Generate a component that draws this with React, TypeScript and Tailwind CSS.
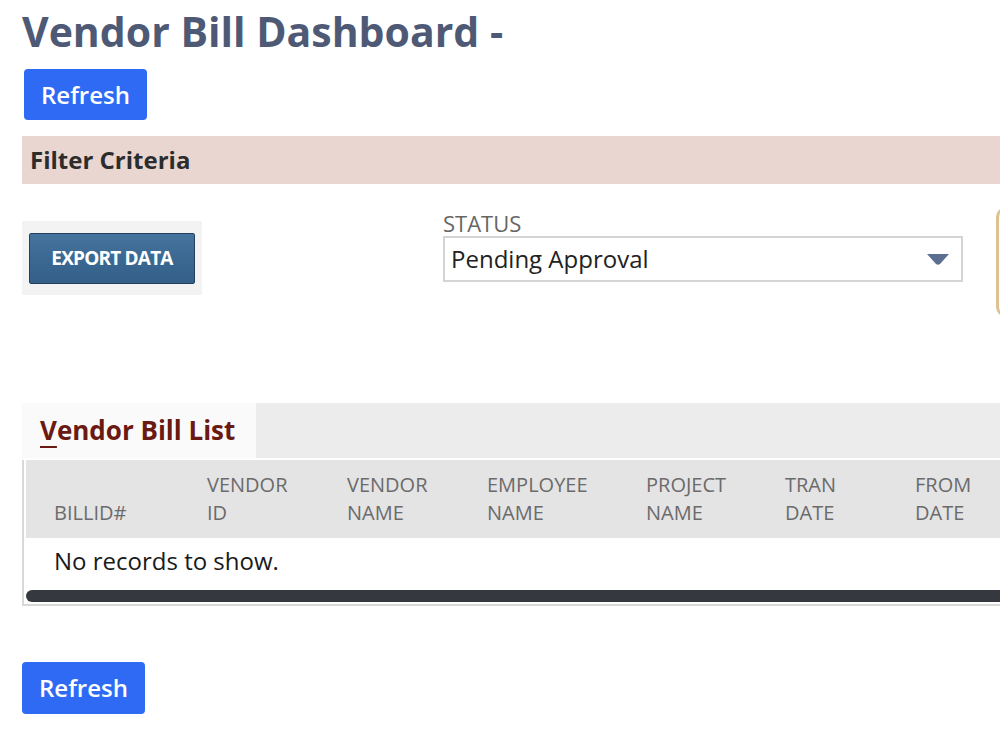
import { useState } from "react";

const columns = [
  { top: "", bottom: "BILLID#", w: "w-[153px]" },
  { top: "VENDOR", bottom: "ID", w: "w-[140px]" },
  { top: "VENDOR", bottom: "NAME", w: "w-[140px]" },
  { top: "EMPLOYEE", bottom: "NAME", w: "w-[159px]" },
  { top: "PROJECT", bottom: "NAME", w: "w-[139px]" },
  { top: "TRAN", bottom: "DATE", w: "w-[130px]" },
  { top: "FROM", bottom: "DATE", w: "w-[120px]" },
];

export default function App() {
  const [status, setStatus] = useState("Pending Approval");

  return (
    <div className="w-[1000px] h-[750px] overflow-hidden bg-white font-['Open_Sans',sans-serif]">
      <div className="pl-[22px]">
        <h1 className="pt-[4px] text-[41px] leading-[54px] font-bold text-[#4e5a75] whitespace-nowrap">
          Vendor Bill Dashboard -
        </h1>

        <button className="mt-[11px] ml-[2px] w-[123px] h-[51px] rounded-[4px] bg-[#2f6af5] text-white text-[24px] font-semibold">
          Refresh
        </button>

        <div className="mt-[16px] h-[48px] bg-[#e9d6d0] flex items-center pl-[8px]">
          <span className="text-[24px] font-bold text-[#2c2c2c]">Filter Criteria</span>
        </div>

        <div className="flex mt-[26px] h-[150px]">
          <div className="shrink-0 mt-[11px] w-[180px] h-[74px] bg-[#f3f3f3] flex items-center pl-[7px]">
            <button className="w-[166px] h-[51px] rounded-[2px] border border-[#23405e] bg-gradient-to-b from-[#44739d] to-[#335f88] text-white text-[19px] font-bold tracking-[-0.8px]">
              EXPORT DATA
            </button>
          </div>

          <div className="shrink-0 ml-[241px] flex flex-col">
            <label className="text-[22px] leading-[26px] text-[#666]">STATUS</label>
            <div className="relative w-[520px] h-[46px] border-2 border-[#d4d4d4] flex items-center pl-[6px]">
              <select
                value={status}
                onChange={(e) => setStatus(e.target.value)}
                className="appearance-none bg-transparent outline-none w-full text-[24px] text-[#222]"
              >
                <option>Pending Approval</option>
                <option>Approved</option>
                <option>Rejected</option>
              </select>
              <svg className="absolute right-[12px] top-[16px]" width="22" height="11" viewBox="0 0 22 11">
                <path d="M0 0 H22 L13 10 Q11 11.5 9 10 Z" fill="#5c6f90" />
              </svg>
            </div>
          </div>

          <div className="shrink-0 ml-[33px] mt-[-4px] w-[40px] h-[112px] rounded-l-[12px] border-l-[3px] border-y border-[#dcc290] bg-[#fffdf9]" />
        </div>

        <div className="mt-[43px] flex h-[55px] bg-[#ececec]">
          <div className="w-[234px] bg-[#fafafa] pl-[18px] flex items-center">
            <span className="text-[26px] font-bold text-[#6a1a12]">
              <span className="underline underline-offset-[6px] decoration-[1.5px]">V</span>endor Bill List
            </span>
          </div>
        </div>

        <div className="border-l-2 border-b-2 border-[#d8d8d8] pl-[2px]">
          <div className="flex h-[78px] bg-[#e4e4e4] mt-[2px] pl-[28px] items-center text-[20px] leading-[28px] text-[#6b6b6b]">
            {columns.map((c, i) => (
              <div key={i} className={`${c.w} shrink-0 flex flex-col`}>
                <span className="h-[28px]">{c.top}</span>
                <span>{c.bottom}</span>
              </div>
            ))}
          </div>
          <div className="h-[52px] pl-[28px] pb-[6px] flex items-center text-[24px] text-[#1a1a1a]">
            No records to show.
          </div>
          <div className="h-[12px] rounded-l-full bg-[#35383e]" />
          <div className="h-[2px]" />
        </div>

        <button className="mt-[56px] w-[123px] h-[52px] rounded-[4px] bg-[#2f6af5] text-white text-[24px] font-semibold">
          Refresh
        </button>
      </div>
    </div>
  );
}
